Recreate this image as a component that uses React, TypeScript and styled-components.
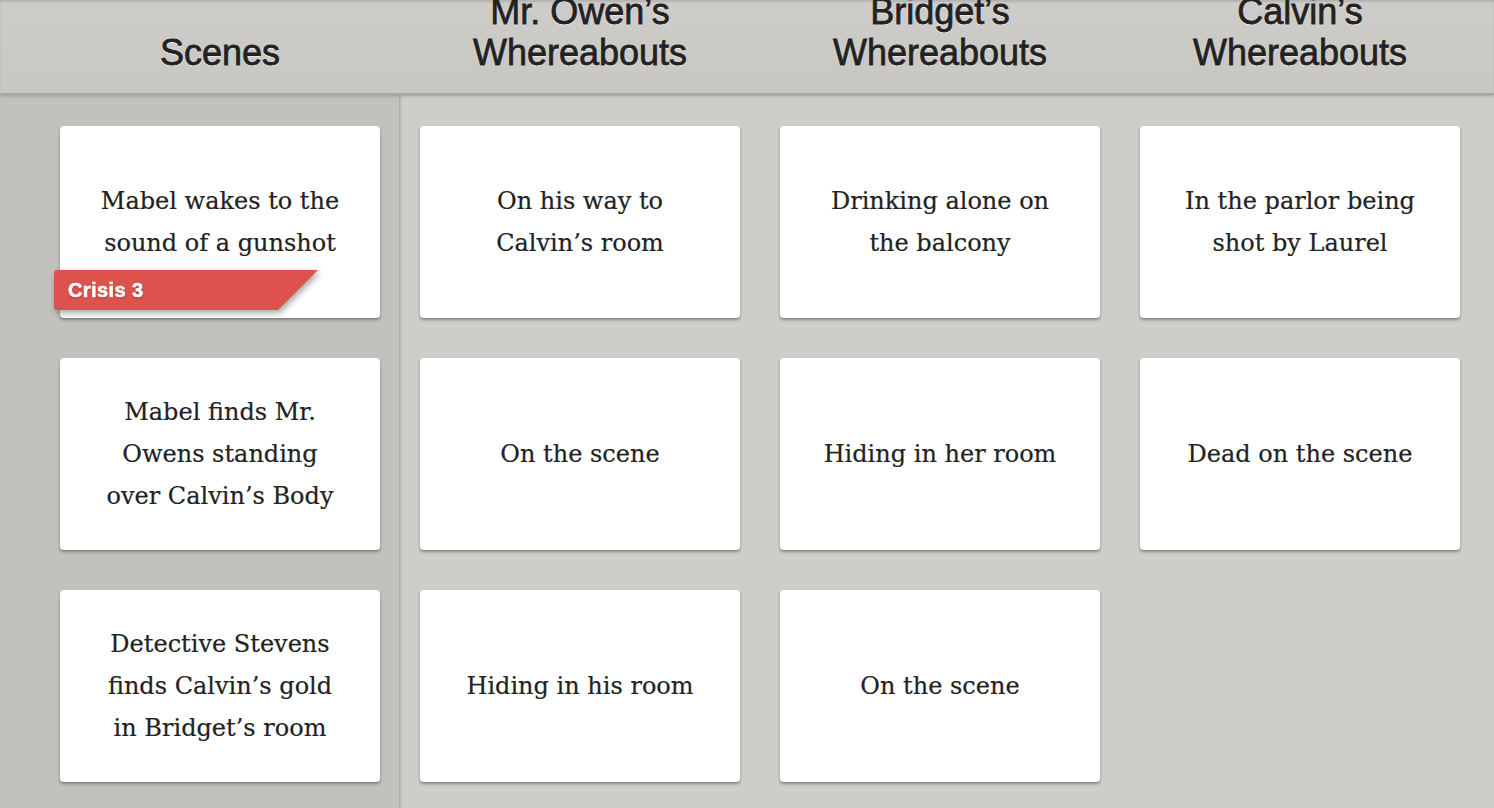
import React from 'react';
import styled, { createGlobalStyle } from 'styled-components';

interface Scene {
    lines: string[];
    badge?: string;
}

const scenes: Scene[] = [
    { lines: ['Mabel wakes to the', 'sound of a gunshot'], badge: 'Crisis 3' },
    { lines: ['Mabel finds Mr.', 'Owens standing', 'over Calvin’s Body'] },
    { lines: ['Detective Stevens', 'finds Calvin’s gold', 'in Bridget’s room'] },
];

// rows of the board: one entry per scene, one cell per character
const whereabouts: (string[] | null)[][] = [
    [['On his way to', 'Calvin’s room'], ['Drinking alone on', 'the balcony'], ['In the parlor being', 'shot by Laurel']],
    [['On the scene'], ['Hiding in her room'], ['Dead on the scene']],
    [['Hiding in his room'], ['On the scene'], null],
];

const headings: string[][] = [
    ['Mr. Owen’s', 'Whereabouts'],
    ['Bridget’s', 'Whereabouts'],
    ['Calvin’s', 'Whereabouts'],
];

const GlobalStyle = createGlobalStyle`
    html, body {
        margin: 0;
        padding: 0;
        background: #cecdc9;
        overflow: hidden;
    }
`;

const CardText = ({ lines }: { lines: string[] }) => (
    <>
        {lines.map((line, i) => (
            <React.Fragment key={i}>
                {i > 0 && <br />}
                {line}
            </React.Fragment>
        ))}
    </>
);

const App = () => (
    <Page>
        <GlobalStyle />
        <Header>
            <HeaderCell first>
                <CardText lines={['Scenes']} />
            </HeaderCell>
            {headings.map((h, i) => (
                <HeaderCell key={i}>
                    <CardText lines={h} />
                </HeaderCell>
            ))}
        </Header>
        <Body>
            <SceneColumn>
                {scenes.map((s, i) => (
                    <Card key={i}>
                        <CardText lines={s.lines} />
                        {s.badge && (
                            <RibbonShadow>
                                <Ribbon>{s.badge}</Ribbon>
                            </RibbonShadow>
                        )}
                    </Card>
                ))}
            </SceneColumn>
            <Board>
                {whereabouts.flat().map((cell, i) =>
                    cell ? (
                        <Card key={i}>
                            <CardText lines={cell} />
                        </Card>
                    ) : (
                        <Blank key={i} />
                    )
                )}
            </Board>
        </Body>
    </Page>
);

const Page = styled.div`
    min-height: 100vh;
    display: flex;
    flex-direction: column;
    background: #cecdc9;
`;

const Header = styled.header`
    position: relative;
    z-index: 2;
    display: flex;
    height: 93px;
    overflow: hidden;
    background: linear-gradient(#cdccc8, #c8c7c3);
    border-bottom: 2px solid #a9a8a4;
    box-shadow: inset 0 2px 2px rgba(0, 0, 0, 0.12), 0 1px 3px rgba(0, 0, 0, 0.22);
`;

const HeaderCell = styled.div<{ first?: boolean }>`
    box-sizing: border-box;
    width: ${(p) => (p.first ? '400px' : '360px')};
    padding: ${(p) => (p.first ? '0 20px 20px 60px' : '0 20px 20px 20px')};
    display: flex;
    align-items: flex-end;
    justify-content: center;
    text-align: center;
    white-space: nowrap;
    font-family: 'Liberation Sans', Arial, sans-serif;
    font-size: 36px;
    line-height: 41px;
    color: #222;
    text-shadow: 0 1px 1px rgba(255, 255, 255, 0.9), 0 0 2px rgba(255, 255, 255, 0.7);
    -webkit-text-stroke: 0.8px #222;
`;

const Body = styled.main`
    flex: 1;
    display: flex;
`;

const SceneColumn = styled.section`
    position: relative;
    z-index: 1;
    box-sizing: border-box;
    width: 400px;
    padding: 31px 20px 26px 60px;
    display: flex;
    flex-direction: column;
    gap: 40px;
    background: #c2c1bd;
    border-right: 1px solid #b1b0ac;
    box-shadow: 1px 0 2px rgba(0, 0, 0, 0.12);
`;

const Board = styled.section`
    padding: 31px 20px 26px 20px;
    display: grid;
    grid-template-columns: repeat(3, 320px);
    grid-auto-rows: 192px;
    gap: 40px;
    align-content: start;
`;

const Card = styled.div`
    position: relative;
    box-sizing: border-box;
    width: 320px;
    height: 192px;
    display: flex;
    align-items: center;
    justify-content: center;
    text-align: center;
    white-space: nowrap;
    background: #fff;
    border-radius: 4px;
    box-shadow: 0 2px 3px rgba(0, 0, 0, 0.35);
    font-family: 'DejaVu Serif', 'Liberation Serif', serif;
    font-size: 24px;
    line-height: 42px;
    color: #222;
    -webkit-text-stroke: 0.2px #222;
`;

const Blank = styled.div``;

const RibbonShadow = styled.div`
    position: absolute;
    left: -6px;
    top: 144px;
    filter: drop-shadow(2px 3px 3px rgba(0, 0, 0, 0.35));
    -webkit-text-stroke: 0;
`;

const Ribbon = styled.div`
    box-sizing: border-box;
    width: 264px;
    height: 40px;
    padding-left: 14px;
    display: flex;
    align-items: center;
    background: #dd524c;
    border-radius: 3px 0 0 3px;
    clip-path: polygon(0 0, 264px 0, 224px 40px, 0 40px);
    font-family: 'Liberation Sans', Arial, sans-serif;
    font-weight: 700;
    font-size: 20px;
    line-height: 1;
    letter-spacing: 0.4px;
    color: #fff;
    -webkit-text-stroke: 0.6px #fff;
    text-shadow: 0 1px 2px rgba(0, 0, 0, 0.35);
`;

export default App;
